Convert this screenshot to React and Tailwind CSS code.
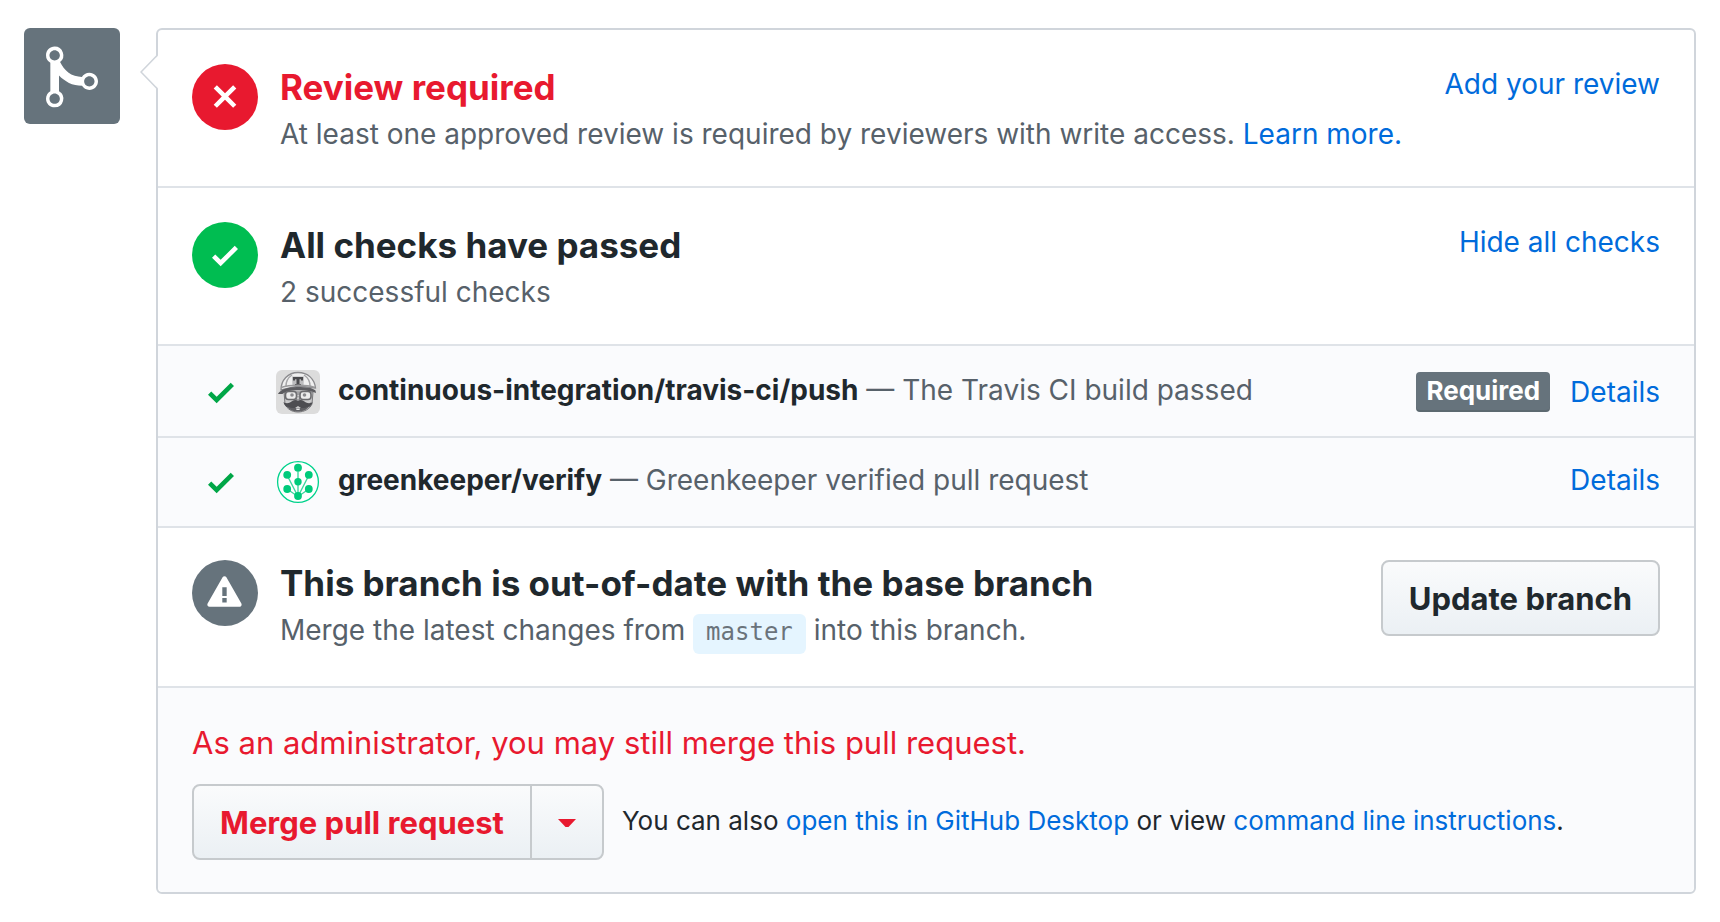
const CHECK = "M12 5l-8 8-4-4 1.5-1.5L4 10l6.5-6.5L12 5z";
const CROSS =
  "M7.48 8l3.75 3.75-1.48 1.48L6 9.48l-3.75 3.75-1.48-1.48L4.52 8 .77 4.25l1.48-1.48L6 6.52l3.75-3.75 1.48 1.48L7.48 8z";
const ALERT =
  "M8.865 1.52c-.18-.31-.51-.5-.87-.5s-.69.19-.87.5L.275 13.5c-.18.31-.18.69 0 1 .19.31.52.5.87.5h13.7c.36 0 .69-.19.86-.5.17-.31.18-.69.01-1L8.865 1.52zM8.995 13h-2v-2h2v2zm0-3h-2V6h2v4z";
const MERGE =
  "M10 7c-.73 0-1.38.41-1.73 1.02V8C7.22 7.98 6 7.64 5.14 6.98c-.75-.58-1.5-1.61-1.89-2.44A1.993 1.993 0 0 0 2 .99C.89.99 0 1.89 0 3a2 2 0 0 0 1 1.72v6.56c-.59.35-1 .99-1 1.72 0 1.11.89 2 2 2a1.993 1.993 0 0 0 1-3.72V7.67c.67.7 1.44 1.27 2.3 1.69.86.42 2.03.63 2.97.64v-.02c.36.61 1 1.02 1.73 1.02 1.11 0 2-.89 2-2 0-1.11-.89-2-2-2zm-6.8 6c0 .66-.55 1.2-1.2 1.2-.65 0-1.2-.55-1.2-1.2 0-.65.55-1.2 1.2-1.2.65 0 1.2.55 1.2 1.2zM2 4.2C1.34 4.2.8 3.65.8 3c0-.65.55-1.2 1.2-1.2.65 0 1.2.55 1.2 1.2 0 .65-.55 1.2-1.2 1.2zm8 6c-.66 0-1.2-.55-1.2-1.2 0-.65.55-1.2 1.2-1.2.65 0 1.2.55 1.2 1.2 0 .65-.55 1.2-1.2 1.2z";

function Octicon({ path, wide, className }) {
  return (
    <svg
      viewBox={wide ? "0 0 16 16" : "0 0 12 16"}
      className={className}
      fill="currentColor"
      fillRule="evenodd"
      aria-hidden="true"
    >
      <path d={path} />
    </svg>
  );
}

function TravisAvatar() {
  return (
    <svg viewBox="0 0 44 44" className="size-11 shrink-0 rounded-md" aria-hidden="true">
      <rect width="44" height="44" fill="#dcdcdc" />
      <path d="M8 22l1 12c2 5 7 8 13 8s12-3 14-8l1-12z" fill="#c9c9ca" stroke="#77777a" />
      <path d="M5 20C5 10 12 2.500 22 2.500S38.500 9 39.500 18l-17-2z" fill="#efefef" stroke="#8b8b8e" strokeWidth="1.300" />
      <path d="M10 16c0-5 3-9 6-11M34 16c0-5-3-9-6-11" fill="none" stroke="#a6a6a8" strokeWidth="1.500" />
      <path d="M16 6.500h12l-.5 9.500h-11z" fill="#bcbcbe" />
      <path d="M17 7h10v3.500h-2V9.300h-1.500V14H25v1.800h-6V14h1.500V9.300H19v1.200h-2z" fill="#4a4a4d" />
      <path d="M2 24c2-4 9-7 19-7s16 1 18.500 3.500L40 23c-4-2-10-2.800-17-2.800S9 21 6.500 24z" fill="#5c5c60" />
      <path d="M5 17.500c9-3 26-3 34 0" fill="none" stroke="#9a9a9c" strokeWidth="1.500" />
      <rect x="9.500" y="21.500" width="11" height="8" rx="3" fill="#ececec" stroke="#6b6b6e" strokeWidth="1.600" />
      <rect x="24" y="21.500" width="11" height="8" rx="3" fill="#ececec" stroke="#6b6b6e" strokeWidth="1.600" />
      <circle cx="16" cy="25" r="1.800" fill="#8a8a8d" />
      <circle cx="28.500" cy="25" r="1.800" fill="#8a8a8d" />
      <path d="M20 24h4M21 26l-1 4h4l-1-4" fill="none" stroke="#77777a" />
      <path d="M22 31c-3-2.500-6 0-8 1.500-2 1-5 1-6.500-.5C8.500 37 13 39 19 38l3-2 3 2c6 1 10.500-1 11.500-6-1.500 1.500-4.500 1.500-6.500.5-2-1.500-5-4-8-1.500z" fill="#4d4d51" />
      <path d="M11 36c2 4 6 5.500 11 5.500S31 40 33 36c-3 2-6 2.300-8.500 2h-5c-2.500.3-5.500 0-8.500-2z" fill="#5f5f63" />
      <path d="M20 38.500h4l-.5 1.500h-3z" fill="#e6e6e6" />
    </svg>
  );
}

function GreenkeeperAvatar() {
  return (
    <svg viewBox="0 0 44 44" className="size-11 shrink-0" aria-hidden="true">
      <circle cx="22" cy="22" r="20.400" fill="#fff" stroke="#00d28c" strokeWidth="1.300" />
      <path d="M22 7.500v29M11 15l11 21.500L33 15M11 29l11 7.500L33 29" fill="none" stroke="#3fd79f" strokeWidth="1.400" />
      <g fill="#00cb7b">
        <circle cx="22" cy="7.700" r="3.900" />
        <circle cx="11.200" cy="14.800" r="3.900" />
        <circle cx="32.800" cy="14.800" r="3.900" />
        <circle cx="22" cy="21.800" r="3.700" />
        <circle cx="11.200" cy="29" r="3.900" />
        <circle cx="32.800" cy="29" r="3.900" />
        <circle cx="22" cy="36" r="3.900" />
      </g>
    </svg>
  );
}

function Link({ children }) {
  return (
    <a href="#" className="text-[#006bdb]">
      {children}
    </a>
  );
}

function StatusBadge({ color, children }) {
  return (
    <div className={`flex size-[66px] shrink-0 items-center justify-center rounded-full text-white ${color}`}>
      {children}
    </div>
  );
}

function Section({
  badge,
  title,
  titleColor = "text-[#1f282d]",
  padding = "pt-[34px] pb-[30px]",
  action,
  children,
}) {
  return (
    <section className={`flex items-start gap-[22px] border-b-2 border-[#dfe3e8] px-[34px] ${padding}`}>
      {badge}
      <div className="min-w-0 flex-1">
        <h2 className={`mb-0.5 text-[35px] leading-[46px] font-bold ${titleColor}`}>{title}</h2>
        <p className="text-[28px] leading-[44px] text-[#57616a]">{children}</p>
      </div>
      {action}
    </section>
  );
}

function CheckRow({ avatar, name, description, required }) {
  return (
    <li
      className={`flex items-center border-b-2 border-[#dfe3e8] bg-[#fafbfd] pr-[34px] pl-[50px] text-[28px] leading-[42px] ${
        required ? "min-h-[92px] pt-0.5" : "min-h-[90px]"
      }`}
    >
      <Octicon path={CHECK} className="h-[35px] w-[26px] shrink-0 text-[#00a647]" />
      <div className="ml-[42px] flex">{avatar}</div>
      <p className="ml-[18px] min-w-0 flex-1 pb-1 text-[#57616a]">
        <strong className="font-bold text-[#1f282d]">{name}</strong> — {description}
      </p>
      {required && (
        <span className="mr-5 rounded-[4px] bg-[#66737c] px-[10px] pb-0.5 text-[26px] leading-[38px] font-bold text-white shadow-[inset_0_-2px_0_rgba(27,31,35,0.12)]">
          Required
        </span>
      )}
      <span className={required ? "" : "pb-1"}>
        <Link>Details</Link>
      </span>
    </li>
  );
}

const BUTTON =
  "h-[76px] border-2 border-[#c6cacd] bg-linear-to-b from-[#fafbfc] to-[#ebf0f4] pt-0.5 text-[31px] font-bold whitespace-nowrap";

export default function App() {
  return (
    <main className="flex items-start gap-9 bg-white p-6 pt-7 font-['Inter','Liberation_Sans',sans-serif]">
      <div className="flex size-24 shrink-0 items-center justify-center rounded-md bg-[#66737c] pt-0.5 text-white">
        <Octicon path={MERGE} className="h-[70px] w-[52px]" />
      </div>

      <div className="relative min-w-0 flex-1 rounded-md border-2 border-[#d0d5db] bg-white">
        <svg viewBox="0 0 18 36" className="absolute top-6 -left-[18px] h-9 w-[18px]" aria-hidden="true">
          <path d="M18 1.500L1.500 18 18 34.500z" fill="#fff" />
          <path d="M17 1.500L1 18l16 16.500" fill="none" stroke="#d0d5db" strokeWidth="1.600" />
        </svg>

        <Section
          badge={
            <StatusBadge color="bg-[#e8192f]">
              <Octicon path={CROSS} className="mb-0.5 h-[35px] w-[26px]" />
            </StatusBadge>
          }
          title="Review required"
          titleColor="text-[#e8192f]"
          action={
            <span className="text-[28px] leading-10">
              <Link>Add your review</Link>
            </span>
          }
        >
          At least one approved review is required by reviewers with write access. <Link>Learn more.</Link>
        </Section>

        <Section
          badge={
            <StatusBadge color="bg-[#00bd51]">
              <Octicon path={CHECK} className="h-[35px] w-[26px]" />
            </StatusBadge>
          }
          title="All checks have passed"
          action={
            <button type="button" className="text-[28px] leading-10 text-[#006bdb]">
              Hide all checks
            </button>
          }
        >
          2 successful checks
        </Section>

        <ul>
          <CheckRow
            avatar={<TravisAvatar />}
            name="continuous-integration/travis-ci/push"
            description="The Travis CI build passed"
            required
          />
          <CheckRow
            avatar={<GreenkeeperAvatar />}
            name="greenkeeper/verify"
            description="Greenkeeper verified pull request"
          />
        </ul>

        <Section
          padding="py-8"
          badge={
            <StatusBadge color="bg-[#66737c]">
              <Octicon path={ALERT} wide className="mr-0.5 mb-1 size-[35px]" />
            </StatusBadge>
          }
          title="This branch is out-of-date with the base branch"
          action={
            <button type="button" className={`${BUTTON} rounded-lg px-[26px] text-[#1f282d]`}>
              Update branch
            </button>
          }
        >
          Merge the latest changes from{" "}
          <code className="inline-block rounded-md bg-[#e5f5ff] px-[13px] pb-1 font-['DejaVu_Sans_Mono',monospace] text-[24px] leading-9 text-[#6a737b]">
            master
          </code>{" "}
          into this branch.
        </Section>

        <footer className="rounded-b-md bg-[#fafbfd] px-[34px] pt-[34px] pb-8">
          <p className="mb-5 text-[31px] leading-[42px] text-[#e8192f]">
            As an administrator, you may still merge this pull request.
          </p>
          <div className="flex items-center gap-[18px]">
            <div className="flex shrink-0">
              <button type="button" className={`${BUTTON} rounded-l-lg px-[26px] text-[#e8192f]`}>
                Merge pull request
              </button>
              <button
                type="button"
                aria-label="Select merge method"
                className={`${BUTTON} -ml-0.5 flex w-[74px] items-center justify-center rounded-r-lg text-[#e8192f]`}
              >
                <svg viewBox="0 0 18 9" className="h-[9px] w-[18px]" fill="currentColor" aria-hidden="true">
                  <path d="M0 0h18L10.500 8h-3z" />
                </svg>
              </button>
            </div>
            <p className="pb-0.5 text-[26px] leading-10 text-[#1f282d]">
              You can also <Link>open this in GitHub Desktop</Link> or view{" "}
              <Link>command line instructions</Link>.
            </p>
          </div>
        </footer>
      </div>
    </main>
  );
}
